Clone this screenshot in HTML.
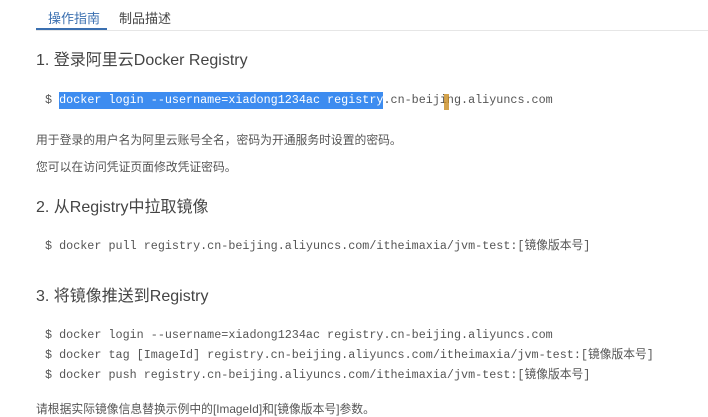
<!DOCTYPE html>
<html><head><meta charset="utf-8"><style>
body{margin:0;width:708px;height:410px;overflow:hidden;background:#fff;font-family:"Liberation Sans","Noto Sans CJK SC",sans-serif;color:#333;position:relative}
.a{position:absolute;white-space:nowrap}
.tabs{position:absolute;left:36px;top:0;width:672px;height:30px;border-bottom:1px solid #e6e6e6}
.t1{left:48px;top:8px;font-size:13px;color:#3a6fb0}
.t2{left:119px;top:8px;font-size:13px;color:#444}
.ul{left:36px;top:28px;width:71px;height:2px;background:#3a6fb0}
h3{position:absolute;margin:0;font-weight:normal;font-size:16px;line-height:20px;color:#444;left:36px;white-space:nowrap}
.c{position:absolute;left:45px;font-family:"Liberation Mono","Noto Sans CJK SC",monospace;font-size:11.75px;line-height:16px;height:16px;color:#555;white-space:nowrap}
.p{position:absolute;left:36px;font-size:11.8px;line-height:16px;color:#555;white-space:nowrap}
.hl{background:#3d8cf0;color:#fff;display:inline-block;line-height:17px}
</style></head><body>
<div class="tabs"></div>
<div class="a t1">操作指南</div>
<div class="a t2">制品描述</div>
<div class="a ul"></div>
<h3 style="top:51px">1. 登录阿里云Docker Registry</h3>
<div class="c" style="top:92px">$ <span class="hl">docker login --username=xiadong1234ac registry</span>.cn-beijing.aliyuncs.com</div>
<div class="a" style="left:444px;top:94px;width:5px;height:16px;background:#c98c20;opacity:.8"></div>
<div class="p" style="top:132px">用于登录的用户名为阿里云账号全名，密码为开通服务时设置的密码。</div>
<div class="p" style="top:159px">您可以在访问凭证页面修改凭证密码。</div>
<h3 style="top:198px">2. 从Registry中拉取镜像</h3>
<div class="c" style="top:238px">$ docker pull registry.cn-beijing.aliyuncs.com/itheimaxia/jvm-test:[镜像版本号]</div>
<h3 style="top:287px">3. 将镜像推送到Registry</h3>
<div class="c" style="top:327px">$ docker login --username=xiadong1234ac registry.cn-beijing.aliyuncs.com</div>
<div class="c" style="top:347px">$ docker tag [ImageId] registry.cn-beijing.aliyuncs.com/itheimaxia/jvm-test:[镜像版本号]</div>
<div class="c" style="top:367px">$ docker push registry.cn-beijing.aliyuncs.com/itheimaxia/jvm-test:[镜像版本号]</div>
<div class="p" style="top:401px">请根据实际镜像信息替换示例中的[ImageId]和[镜像版本号]参数。</div>
</body></html>
